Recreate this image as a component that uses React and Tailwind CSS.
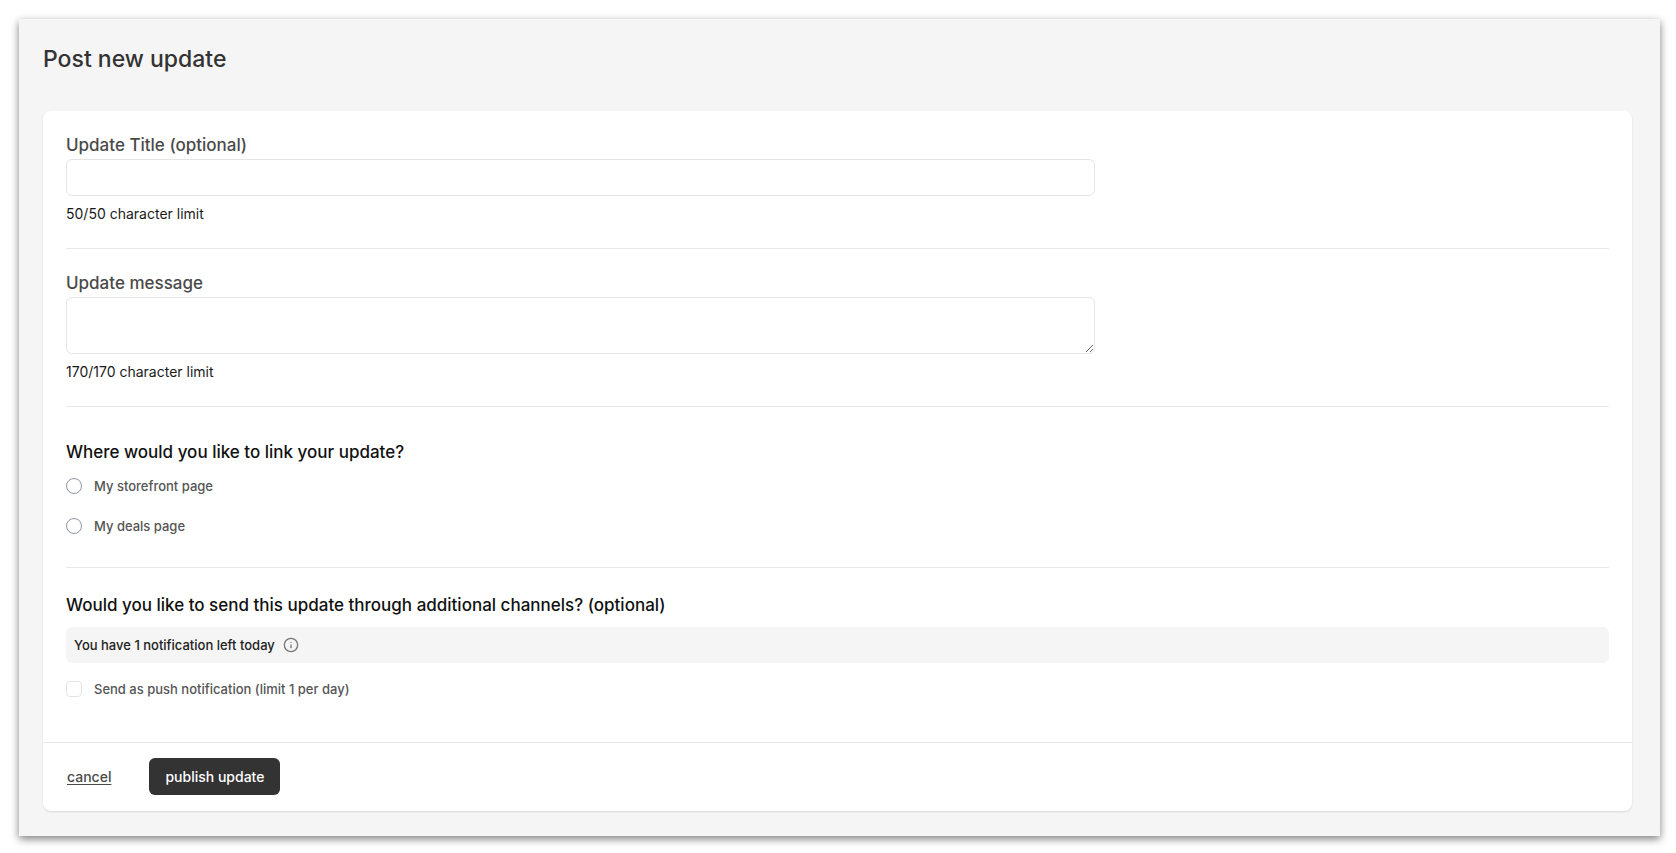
import { useState } from 'react';
import { Info } from 'lucide-react';

const TITLE_LIMIT = 50;
const MESSAGE_LIMIT = 170;

const linkOptions = [
  { value: 'storefront', label: 'My storefront page' },
  { value: 'deals', label: 'My deals page' },
];

export default function App() {
  const [title, setTitle] = useState('');
  const [message, setMessage] = useState('');
  const [link, setLink] = useState('');
  const [push, setPush] = useState(false);

  return (
    <div className="bg-white px-4 py-[18px] font-['Inter',sans-serif] text-[14px] leading-5">
      <main className="ml-[3px] mt-px bg-[#f5f5f5] pt-5 pr-7 pb-[25px] pl-6 shadow-[0_3px_8px_0_rgba(0,0,0,0.5)]">
        <h1 className="text-[23px] font-medium leading-10 text-[#333333]">Post new update</h1>

        <form
          className="mt-8 rounded-lg bg-white shadow-[0_1px_2px_rgba(0,0,0,0.12)]"
          onSubmit={(e) => e.preventDefault()}
        >
          <div className="px-[23px]">
            {/* Title */}
            <section className="border-b border-[#e8e8e8] pt-5 pb-6">
              <label htmlFor="update-title" className="block text-[17px] font-medium leading-7 text-[#4a4a4a]">
                Update Title (optional)
              </label>
              <input
                id="update-title"
                type="text"
                maxLength={TITLE_LIMIT}
                value={title}
                onChange={(e) => setTitle(e.target.value)}
                className="block h-[37px] w-2/3 rounded-md border border-[#e5e5e5] px-3 outline-none"
              />
              <p className="mt-2 text-[#1a1a1a]">
                {TITLE_LIMIT - title.length}/{TITLE_LIMIT} character limit
              </p>
            </section>

            {/* Message */}
            <section className="border-b border-[#e8e8e8] pt-5 pb-6">
              <label htmlFor="update-message" className="block text-[17px] font-medium leading-7 text-[#4a4a4a]">
                Update message
              </label>
              <textarea
                id="update-message"
                maxLength={MESSAGE_LIMIT}
                value={message}
                onChange={(e) => setMessage(e.target.value)}
                className="block h-[57px] w-2/3 resize rounded-md border border-[#e5e5e5] px-3 py-2 outline-none"
              />
              <p className="mt-2 text-[#1a1a1a]">
                {MESSAGE_LIMIT - message.length}/{MESSAGE_LIMIT} character limit
              </p>
            </section>

            {/* Link target */}
            <fieldset className="border-b border-[#e8e8e8] pt-[31px] pb-[31px]">
              <legend className="contents">
                <span className="block text-[17px] font-medium leading-7 text-[#111111]">
                  Where would you like to link your update?
                </span>
              </legend>
              <div className="mt-[10px] flex flex-col items-start gap-5 text-[13px] font-medium">
                {linkOptions.map((option) => (
                  <label key={option.value} className="flex items-center gap-3 text-[#555555]">
                    <input
                      type="radio"
                      name="link"
                      value={option.value}
                      checked={link === option.value}
                      onChange={() => setLink(option.value)}
                      className="size-4 appearance-none rounded-full border border-[#8f95a3] bg-white checked:border-[5px] checked:border-[#333333]"
                    />
                    {option.label}
                  </label>
                ))}
              </div>
            </fieldset>

            {/* Channels */}
            <section className="pt-[23px] pb-[43px] text-[13px] font-medium">
              <h2 className="text-[17px] font-medium leading-7 text-[#111111]">
                Would you like to send this update through additional channels? (optional)
              </h2>
              <div className="mt-2 flex items-center gap-2 rounded-md bg-[#f5f5f5] p-2 text-[#222222]">
                You have 1 notification left today
                <Info className="size-4 text-[#777777]" strokeWidth={2} />
              </div>
              <label className="mt-4 flex w-fit items-center gap-3 text-[#555555]">
                <input
                  type="checkbox"
                  checked={push}
                  onChange={(e) => setPush(e.target.checked)}
                  className="size-4 appearance-none rounded-[4px] border border-[#e5e5e5] bg-white checked:bg-[#333333]"
                />
                Send as push notification (limit 1 per day)
              </label>
            </section>
          </div>

          <footer className="flex items-center gap-[38px] border-t border-[#e8e8e8] px-6 pt-[15px] pb-4">
            <a href="#cancel" className="font-medium text-[#4a4a4a] underline underline-offset-2">
              cancel
            </a>
            <button type="submit" className="h-[37px] rounded-md bg-[#333333] px-4 font-medium text-white">
              publish update
            </button>
          </footer>
        </form>
      </main>
    </div>
  );
}
